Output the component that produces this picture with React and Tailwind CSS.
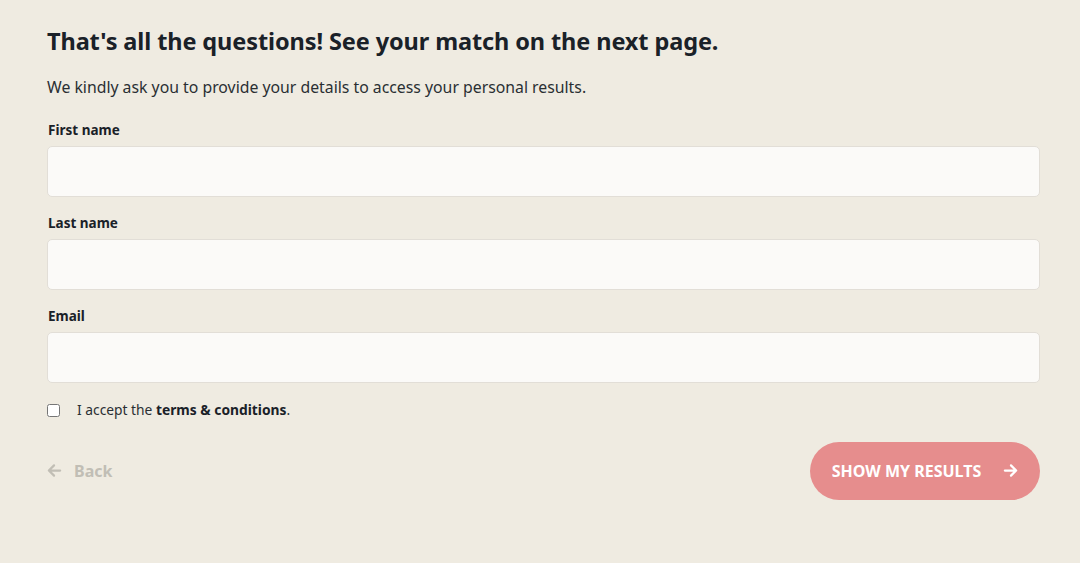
import { useState } from 'react';

const Field = ({ label, id, type = 'text' }) => (
  <div className="flex flex-col">
    <label htmlFor={id} className="mb-[7px] pl-px text-[13.5px] font-bold leading-[18px] text-[#1a2128]">
      {label}
    </label>
    <input
      id={id}
      type={type}
      className="h-[51px] w-full rounded-[5px] border border-[#e2ded7] bg-[#fbfaf8] px-4 outline-none"
    />
  </div>
);

export default function App() {
  const [accepted, setAccepted] = useState(false);

  return (
    <section
      className="min-h-screen w-full bg-[#efebe1] text-[#1a2128]"
      style={{ fontFamily: '"Noto Sans", "Open Sans", sans-serif' }}
    >
      <div className="ml-[47px] mr-[40px] pt-[25px]">
        {/* Header */}
        <h1 className="text-[23.5px] font-bold leading-[32px] tracking-[-0.1px]">
          That's all the questions! See your match on the next page.
        </h1>
        <p className="mt-[19px] text-[15.8px] leading-[22px] text-[#2a2f33]">
          We kindly ask you to provide your details to access your personal results.
        </p>

        {/* Form */}
        <div className="mt-[23px] flex flex-col gap-[17px]">
          <Field label="First name" id="first" />
          <Field label="Last name" id="last" />
          <Field label="Email" id="email" type="email" />
        </div>

        {/* Terms */}
        <label className="mt-[17px] flex items-center gap-[17px] text-[13.8px] text-[#2a2f33]">
          <input
            type="checkbox"
            checked={accepted}
            onChange={(e) => setAccepted(e.target.checked)}
            className="h-[13px] w-[13px]"
          />
          <span>
            I accept the <b className="font-bold text-[#1a2128]">terms &amp; conditions</b>.
          </span>
        </label>

        {/* Actions */}
        <div className="mt-[21px] flex items-center justify-between">
          <button className="flex items-center gap-[12px] text-[16px] font-bold text-[#c1beb5]">
            <svg width="15" height="15" viewBox="0 0 16 16" fill="none" stroke="currentColor" strokeWidth="2.4" strokeLinecap="round" strokeLinejoin="round">
              <path d="M14 8H2.5M7.5 2.5 2 8l5.5 5.5" />
            </svg>
            <span>Back</span>
          </button>
          <button className="flex h-[58px] w-[230px] items-center justify-center gap-[22px] rounded-full bg-[#e68d8d] text-[16px] font-bold text-white">
            <span>SHOW MY RESULTS</span>
            <svg width="15" height="15" viewBox="0 0 16 16" fill="none" stroke="currentColor" strokeWidth="2.4" strokeLinecap="round" strokeLinejoin="round">
              <path d="M2 8h11.5M8.5 2.5 14 8l-5.5 5.5" />
            </svg>
          </button>
        </div>
      </div>
    </section>
  );
}
